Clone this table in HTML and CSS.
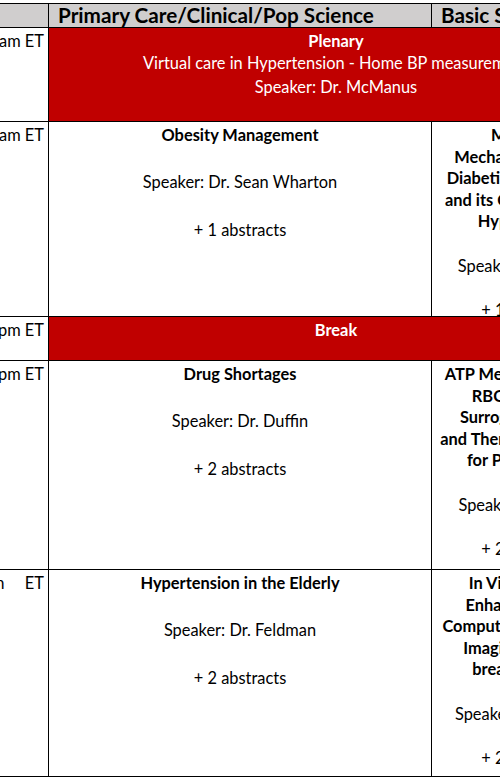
FILE: index.html
```html
<!DOCTYPE html>
<html lang="en">
<head>
<meta charset="utf-8">
<title>Program Schedule</title>
<link rel="stylesheet" href="styles.css">
</head>
<body>
<div class="viewport">
  <div class="schedule">
    <div class="cell head"></div>
    <div class="cell head"><span>Primary Care/Clinical/Pop Science</span></div>
    <div class="cell head"><span>Basic Science</span></div>

    <div class="cell time"><span>9:00 - 10:00 am ET</span></div>
    <div class="cell red span">
      <p class="title">Plenary</p>
      <p>Virtual care in Hypertension - Home BP measurement</p>
      <p class="spk">Speaker: Dr. McManus</p>
    </div>

    <div class="cell time"><span>10:00 - 11:00 am ET</span></div>
    <div class="cell session">
      <p class="title">Obesity Management</p>
      <p class="gap">Speaker: Dr. Sean Wharton</p>
      <p class="gap2">+ 1 abstracts</p>
    </div>
    <div class="cell session multi">
      <p class="title">Molecular<br>Mechanisms Behind<br>Diabetic Nephropathy<br>and its Contribution to<br>Hypertension</p>
      <p class="gap">Speaker: Dr. Burger</p>
      <p class="gap2">+ 1 abstracts</p>
    </div>

    <div class="cell time"><span>12:00 - 12:30 pm ET</span></div>
    <div class="cell red span">
      <p class="title">Break</p>
    </div>

    <div class="cell time"><span>12:30 - 1:30 pm ET</span></div>
    <div class="cell session">
      <p class="title">Drug Shortages</p>
      <p class="gap">Speaker: Dr. Duffin</p>
      <p class="gap2">+ 2 abstracts</p>
    </div>
    <div class="cell session multi">
      <p class="title">ATP Metabolism in the<br>RBC Storage as<br>Surrogate Markers<br>and Therapeutic Targets<br>for Preeclampsia</p>
      <p class="gap">Speaker: Dr. Kassiri</p>
      <p class="gap2">+ 2 abstracts</p>
    </div>

    <div class="cell time"><span>1:30 - 2:30 pm&emsp;&ensp;ET</span></div>
    <div class="cell session">
      <p class="title">Hypertension in the Elderly</p>
      <p class="gap">Speaker: Dr. Feldman</p>
      <p class="gap2">+ 2 abstracts</p>
    </div>
    <div class="cell session multi">
      <p class="title">In Vivo Contrast<br>Enhanced Micro-<br>Computed Tomography<br>Imaging of mouse<br>breast tumours</p>
      <p class="gap">Speaker: Dr. Fenster</p>
      <p class="gap2">+ 2 abstracts</p>
    </div>
  </div>
</div>
</body>
</html>
```

FILE: styles.css
```css
html, body {
  margin: 0;
  padding: 0;
  overflow: hidden;
  background: #ffffff;
}

.viewport {
  width: 500px;
  height: 780px;
  overflow: hidden;
  padding-top: 3px;
  box-sizing: border-box;
}

.schedule {
  display: grid;
  grid-template-columns: 120px 382px 191px;
  grid-template-rows: 23px 93px 194px 43px 208px 206px;
  gap: 1px;
  padding: 1px;
  background: #000000;
  width: max-content;
  margin-left: -73px;
  font-family: Lato, "Open Sans", sans-serif;
  font-size: 16.4px;
  line-height: 21.5px;
  color: #000000;
}

.cell {
  background: #ffffff;
  padding: 2px 4px 0;
  overflow: hidden;
}

.cell p {
  margin: 0;
}

.head {
  background: #d0cece;
  font-weight: 700;
  font-size: 20.7px;
  line-height: 23px;
  padding: 0 9px;
  white-space: nowrap;
}

.time {
  display: flex;
  justify-content: flex-end;
  align-items: flex-start;
  padding-right: 4px;
  white-space: nowrap;
}

.red {
  background: #c00000;
  color: #ffffff;
  text-align: center;
}

.span {
  grid-column: 2 / 4;
}

.spk {
  margin-top: 3px !important;
}

.session {
  text-align: center;
}

.title {
  font-weight: 700;
}

.gap {
  margin-top: 25px !important;
}

.gap2 {
  margin-top: 26.5px !important;
}

.multi .gap,
.multi .gap2 {
  margin-top: 23px !important;
}
```
